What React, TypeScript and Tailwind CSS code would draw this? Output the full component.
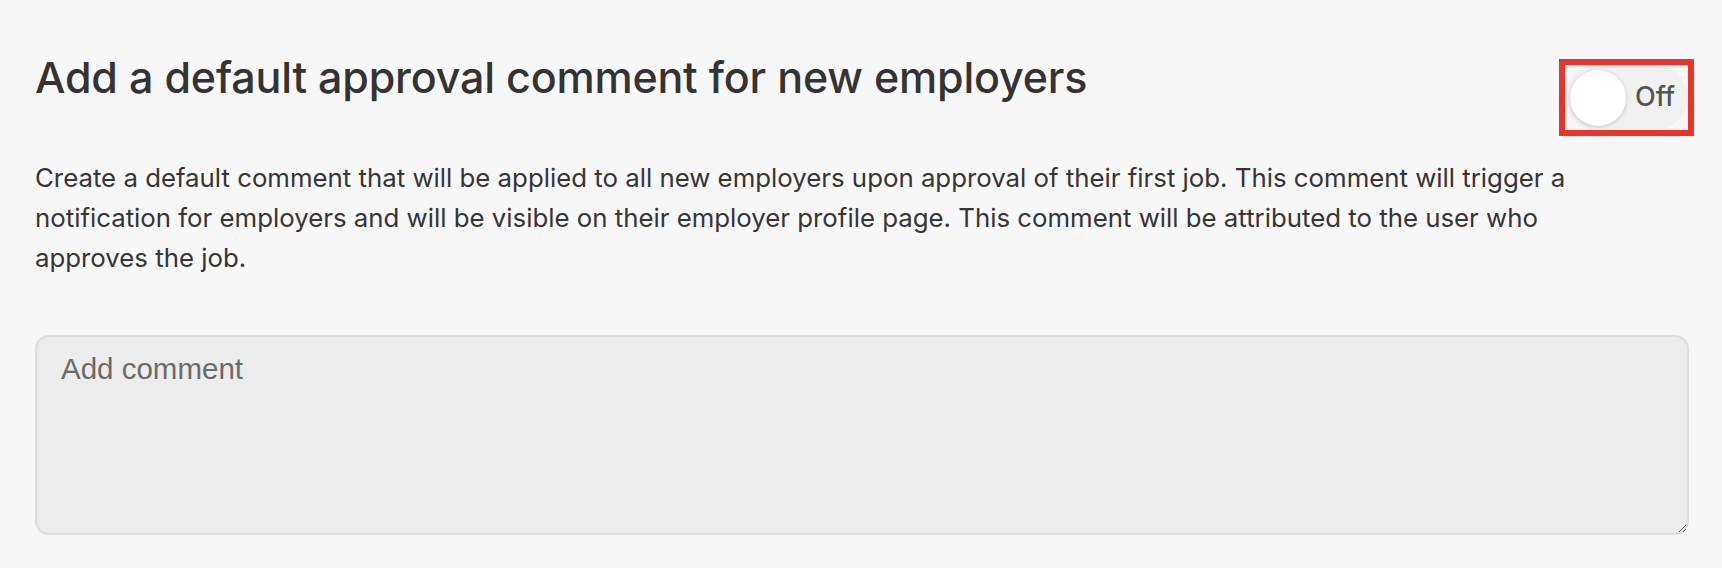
export default function App() {
  return (
    <div className="min-h-[568px] w-full bg-[#f7f7f7] pl-[35px] pr-[33px] pt-[51px] font-['Inter',sans-serif] text-[#333333]">
      <div className="flex items-start justify-between">
        <h1 className="text-[43px] leading-[52px] font-medium tracking-[-0.2px]">
          Add a default approval comment for new employers
        </h1>
        <div className="mt-[8px] -mr-[5px] border-[6px] border-[#e8352b]">
          <button
            type="button"
            className="flex h-[65px] w-[123px] items-center rounded-full bg-[#f1f1f1] pl-[5px]"
          >
            <span className="h-[56px] w-[56px] rounded-full bg-white shadow-[0_1px_4px_rgba(0,0,0,0.18)]" />
            <span className="ml-[9px] text-[27px] font-medium text-[#555555]">Off</span>
          </button>
        </div>
      </div>
      <p className="mt-[22px] max-w-[1610px] text-[25.8px] leading-[40px] text-[#353535]">
        Create a default comment that will be applied to all new employers upon approval of their
        first job. This comment will trigger a notification for employers and will be visible on
        their employer profile page. This comment will be attributed to the user who approves the
        job.
      </p>
      <textarea
        placeholder="Add comment"
        className="mt-[57px] block h-[200px] w-full rounded-[14px] border-2 border-[#dedede] bg-[#ececec] px-[24px] pt-[10px] font-['Liberation_Sans',Arial,sans-serif] text-[29.5px] text-[#333333] outline-none placeholder:text-[#6b6b6b]"
      />
    </div>
  )
}
